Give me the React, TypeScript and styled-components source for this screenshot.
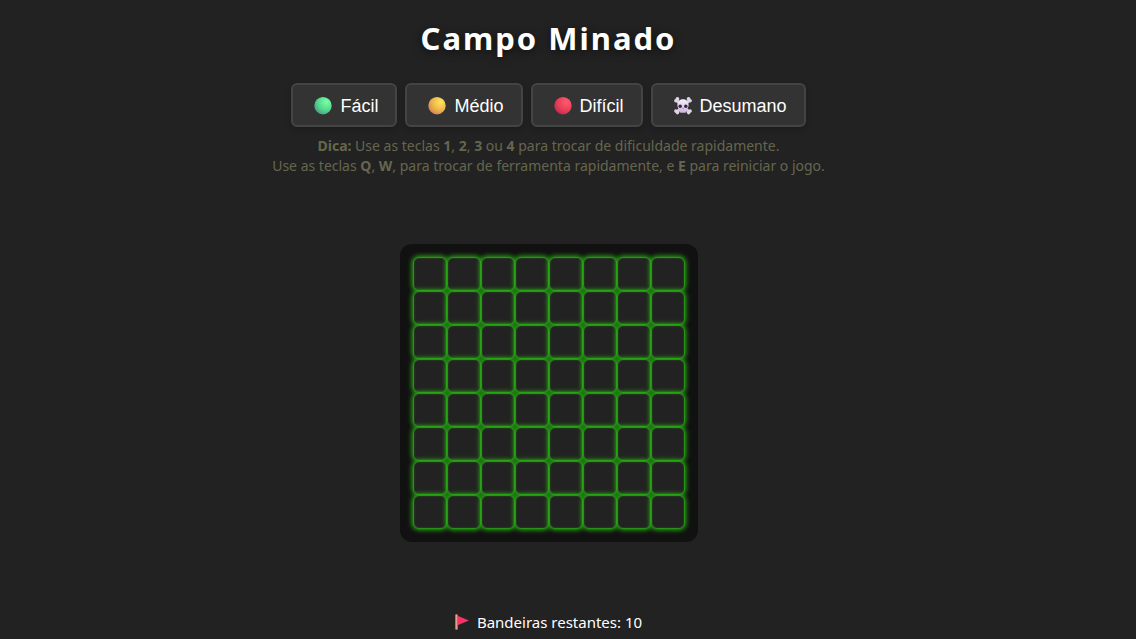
import React, { useState } from "react";
import styled, { createGlobalStyle } from "styled-components";

const GlobalStyle = createGlobalStyle`
  *, *::before, *::after { box-sizing: border-box; }
  body {
    margin: 0;
    background: #222;
    color: #fff;
    font-family: "Segoe UI", "Noto Sans", sans-serif;
  }
`;

const Page = styled.main`
  display: flex;
  flex-direction: column;
  align-items: center;
  padding: 16px 39px 0 0;
`;

const Title = styled.h1`
  margin: 0;
  font-size: 31px;
  line-height: 44px;
  font-weight: 700;
  letter-spacing: 2px;
  text-shadow: 0 2px 8px rgba(0, 0, 0, 0.6);
`;

const Levels = styled.div`
  display: flex;
  gap: 8px;
  margin-top: 23px;
`;

const LevelButton = styled.button`
  display: flex;
  align-items: center;
  gap: 8px;
  height: 44px;
  padding: 2px 17px 0 21px;
  border: 2px solid #444;
  border-radius: 6px;
  background: #333;
  color: #fff;
  font-family: Arial, "Liberation Sans", sans-serif;
  font-size: 18px;
  cursor: pointer;
  box-shadow: 0 2px 6px rgba(0, 0, 0, 0.2);
`;

const Tip = styled.p`
  margin: 9px 0 0;
  font-size: 14px;
  line-height: 20px;
  text-align: center;
  color: #66664f;
`;

const Board = styled.div`
  display: grid;
  grid-template-columns: repeat(8, 34px);
  grid-auto-rows: 34px;
  margin-top: 68px;
  padding: 13px;
  border-radius: 12px;
  background: #111;
`;

const Cell = styled.button`
  padding: 0;
  border: 1px solid #269416;
  border-radius: 6px;
  background: #222;
  box-shadow: 0 0 5px 1px #2cae18, inset 0 0 2px rgba(47, 166, 26, 0.5);
  cursor: pointer;
`;

const Counter = styled.p`
  display: flex;
  align-items: center;
  gap: 8px;
  margin: 70px 0 0;
  font-size: 15px;
  line-height: 20px;
`;

const Icon = styled.svg`
  flex: none;
  display: block;
`;

type BallProps = { id: string; light: string; main: string; edge: string };

function Ball({ id, light, main, edge }: BallProps) {
  return (
    <Icon width="18" height="18" viewBox="0 0 18 18" aria-hidden="true">
      <defs>
        <radialGradient id={id} cx="0.7" cy="0.28" r="0.8">
          <stop offset="0" stopColor={light} />
          <stop offset="0.6" stopColor={main} />
          <stop offset="1" stopColor={edge} />
        </radialGradient>
      </defs>
      <circle cx="9" cy="8.7" r="8.7" fill={`url(#${id})`} />
    </Icon>
  );
}

function Skull() {
  return (
    <Icon width="18" height="18" viewBox="0 0 18 18" aria-hidden="true">
      <defs>
        <linearGradient id="bone" x1="0" y1="0" x2="0" y2="1">
          <stop offset="0" stopColor="#f6f0f6" />
          <stop offset="1" stopColor="#cdb4e2" />
        </linearGradient>
      </defs>
      <g fill="#e3d3e6">
        <path d="M2.5 3.5 15.5 15M15.5 3.5 2.5 15" stroke="#dccbe2" strokeWidth="2.8" />
        <circle cx="3.4" cy="2" r="1.9" />
        <circle cx="1.9" cy="3.7" r="1.8" />
        <circle cx="14.6" cy="2" r="1.9" />
        <circle cx="16.1" cy="3.7" r="1.8" />
        <circle cx="1.9" cy="14" r="1.8" />
        <circle cx="3.4" cy="15.6" r="1.8" />
        <circle cx="16.1" cy="14" r="1.8" />
        <circle cx="14.6" cy="15.6" r="1.8" />
      </g>
      <path
        d="M9 2.2c-3.6 0-5.6 2.4-5.6 5.8 0 1.8.6 3.2 1.7 4v1.8c0 1.2.8 2 1.9 2h4c1.100 0 1.900-.8 1.900-2V12c1.100-.8 1.700-2.200 1.700-4 0-3.400-2-5.800-5.600-5.800Z"
        fill="url(#bone)"
      />
      <circle cx="6.2" cy="9.2" r="1.7" fill="#35253f" />
      <circle cx="11.8" cy="9.2" r="1.7" fill="#35253f" />
      <path d="m9 10.4-.7 1.100h1.400Z" fill="#58406a" />
    </Icon>
  );
}

function Flag() {
  return (
    <Icon width="14" height="16" viewBox="0 0 14 16" aria-hidden="true">
      <path d="M2.5 1.8 14 6.600 2.500 11.200Z" fill="#f8336a" />
      <path d="M0 .5h3v15H0Z" fill="#b86f55" />
      <path d="M1 .5h1v15H1Z" fill="#e3a084" />
    </Icon>
  );
}

const levels = [
  { name: "Fácil", icon: <Ball id="green" light="#79ffa5" main="#54d98c" edge="#4a9b87" /> },
  { name: "Médio", icon: <Ball id="amber" light="#ffe45e" main="#eeb44a" edge="#cf8457" /> },
  { name: "Difícil", icon: <Ball id="red" light="#ff5a70" main="#ea3f58" edge="#bf2b50" /> },
  { name: "Desumano", icon: <Skull /> },
];

const cells = Array.from({ length: 64 }, (_, i) => i);

export default function App() {
  const [, setLevel] = useState("Fácil");
  return (
    <>
      <GlobalStyle />
      <Page>
        <Title>Campo Minado</Title>
        <Levels>
          {levels.map(({ name, icon }) => (
            <LevelButton key={name} type="button" onClick={() => setLevel(name)}>
              {icon}
              {name}
            </LevelButton>
          ))}
        </Levels>
        <Tip>
          <b>Dica:</b> Use as teclas <b>1</b>, <b>2</b>, <b>3</b> ou <b>4</b> para trocar de
          dificuldade rapidamente.
          <br />
          Use as teclas <b>Q</b>, <b>W</b>, para trocar de ferramenta rapidamente, e <b>E</b> para
          reiniciar o jogo.
        </Tip>
        <Board>
          {cells.map((i) => (
            <Cell
              key={i}
              type="button"
              aria-label={`Linha ${Math.floor(i / 8) + 1}, coluna ${(i % 8) + 1}`}
            />
          ))}
        </Board>
        <Counter>
          <Flag />
          <span>Bandeiras restantes: 10</span>
        </Counter>
      </Page>
    </>
  );
}
